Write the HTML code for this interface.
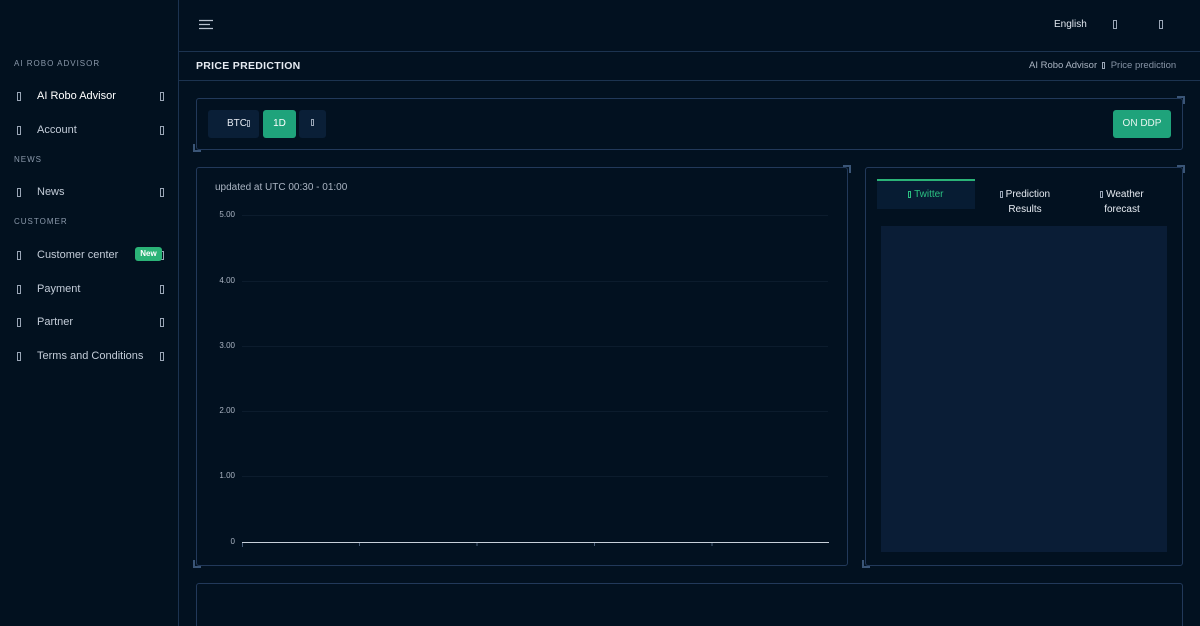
<!DOCTYPE html><html><head><style>
*{box-sizing:border-box;margin:0;padding:0}
html,body{width:1200px;height:626px;overflow:hidden}
body{background:#021120;font-family:"Liberation Sans",sans-serif;color:#c9d2de;position:relative}
.a{position:absolute}
.tofu{display:inline-block;width:4px;height:9px;border:1px solid #9aa6b6;vertical-align:middle}
.sb{left:0;top:0;width:179px;height:626px;border-right:1px solid #1c3350;background:#02111f}
.sec{font-size:8px;letter-spacing:1px;color:#8a98aa;left:14px}
.it{left:0;width:178px;font-size:11px;color:#c3ccd8}
.it .tofu{position:absolute;left:17px;top:3px}
.it .r{position:absolute;left:160px;top:3px}
.it span.t{position:absolute;left:37px;top:1px}
.card{border:1px solid #22395a;border-radius:3px}
.corner{width:8px;height:8px;border-color:#3a5577;border-style:solid;border-width:0}
.gl{left:242px;width:586px;height:1px;background:#0c1c2d}
.yl{font-size:8px;color:#aab4c2;width:40px;text-align:right;left:195px}
</style></head><body>
<div class="a sb"></div>
<div class="a sec" style="top:59px">AI ROBO ADVISOR</div>
<div class="a it" style="top:89px;color:#fff"><i class="tofu"></i><span class="t">AI Robo Advisor</span><i class="tofu r"></i></div>
<div class="a it" style="top:123px"><i class="tofu"></i><span class="t">Account</span><i class="tofu r"></i></div>
<div class="a sec" style="top:155px">NEWS</div>
<div class="a it" style="top:185px"><i class="tofu"></i><span class="t">News</span><i class="tofu r"></i></div>
<div class="a sec" style="top:217px">CUSTOMER</div>
<div class="a it" style="top:248px"><i class="tofu"></i><span class="t">Customer center</span><i class="tofu r"></i></div>
<div class="a" style="left:135px;top:247px;width:27px;height:14px;background:#2bb377;border-radius:3px;color:#fff;font-size:8px;font-weight:bold;text-align:center;line-height:14px">New</div>
<div class="a it" style="top:282px"><i class="tofu"></i><span class="t">Payment</span><i class="tofu r"></i></div>
<div class="a it" style="top:315px"><i class="tofu"></i><span class="t">Partner</span><i class="tofu r"></i></div>
<div class="a it" style="top:349px"><i class="tofu"></i><span class="t">Terms and Conditions</span><i class="tofu r"></i></div>

<svg class="a" style="left:199px;top:19px" width="16" height="12"><path d="M0 1.5H14M0 5.5H11M0 9.5H14" stroke="#b8c2cf" stroke-width="1.3"/></svg>
<div class="a" style="left:1054px;top:19px;font-size:10px;color:#e0e6ee">English</div>
<i class="a tofu" style="left:1113px;top:20px"></i><i class="a tofu" style="left:1159px;top:20px"></i>
<div class="a" style="left:179px;top:51px;width:1021px;height:1px;background:#1c3350"></div>
<div class="a" style="left:196px;top:60px;font-size:10.5px;font-weight:bold;color:#e6ebf2;letter-spacing:.3px">PRICE PREDICTION</div>
<div class="a" style="left:1029px;top:60px;font-size:9.5px;color:#aab4c2;white-space:nowrap">AI Robo Advisor &nbsp;<i class="tofu" style="height:7px;width:3px"></i>&nbsp; <span style="color:#8794a6">Price prediction</span></div>
<div class="a" style="left:179px;top:80px;width:1021px;height:1px;background:#1c3350"></div>

<div class="a card" style="left:196px;top:98px;width:987px;height:52px"></div>
<div class="a corner" style="left:193px;top:144px;border-left-width:2px;border-bottom-width:2px"></div>
<div class="a corner" style="left:1177px;top:96px;border-right-width:2px;border-top-width:2px"></div>
<div class="a" style="left:208px;top:110px;width:51px;height:28px;background:#0a1f37;border-radius:3px;color:#e6ebf2;font-size:10px;line-height:28px;padding-left:19px">BTC<i class="tofu" style="height:7px;width:3px"></i></div>
<div class="a" style="left:263px;top:110px;width:33px;height:28px;background:#1fa37b;border-radius:3px;color:#fff;font-size:10px;line-height:28px;text-align:center">1D</div>
<div class="a" style="left:299px;top:110px;width:27px;height:28px;background:#0a1f37;border-radius:3px;text-align:center;line-height:26px"><i class="tofu" style="height:7px;width:3px"></i></div>
<div class="a" style="left:1113px;top:110px;width:58px;height:28px;background:#1fa37b;border-radius:3px;color:#e6f5ef;font-size:10px;line-height:28px;text-align:center">ON DDP</div>

<div class="a card" style="left:196px;top:167px;width:652px;height:399px"></div>
<div class="a corner" style="left:193px;top:560px;border-left-width:2px;border-bottom-width:2px"></div>
<div class="a corner" style="left:843px;top:165px;border-right-width:2px;border-top-width:2px"></div>
<div class="a" style="left:215px;top:182px;font-size:10px;color:#aab4c2">updated at UTC 00:30 - 01:00</div>
<div class="a gl" style="top:215px"></div><div class="a yl" style="top:210px">5.00</div>
<div class="a gl" style="top:281px"></div><div class="a yl" style="top:276px">4.00</div>
<div class="a gl" style="top:346px"></div><div class="a yl" style="top:341px">3.00</div>
<div class="a gl" style="top:411px"></div><div class="a yl" style="top:406px">2.00</div>
<div class="a gl" style="top:476px"></div><div class="a yl" style="top:471px">1.00</div>
<div class="a yl" style="top:537px">0</div>
<div class="a" style="left:242px;top:542px;width:587px;height:1px;background:#c8d0da"></div>
<svg class="a" style="left:240px;top:543px" width="600" height="5"><path d="M2.5 0V4M119.5 0V3M237 0V3M354.5 0V3M472 0V3" stroke="#4a5e78"/></svg>

<div class="a card" style="left:865px;top:167px;width:318px;height:399px"></div>
<div class="a corner" style="left:862px;top:560px;border-left-width:2px;border-bottom-width:2px"></div>
<div class="a corner" style="left:1177px;top:165px;border-right-width:2px;border-top-width:2px"></div>
<div class="a" style="left:877px;top:179px;width:98px;height:30px;background:#071c33;border-top:2px solid #2bb377;color:#2bc082;font-size:10px;text-align:center;line-height:28px"><i class="tofu" style="height:7px;width:3px;border-color:#2bc082"></i> Twitter</div>
<div class="a" style="left:976px;top:187px;width:98px;color:#e6ebf2;font-size:10px;text-align:center;line-height:15px"><i class="tofu" style="height:7px;width:3px"></i> Prediction<br>Results</div>
<div class="a" style="left:1073px;top:187px;width:98px;color:#e6ebf2;font-size:10px;text-align:center;line-height:15px"><i class="tofu" style="height:7px;width:3px"></i> Weather<br>forecast</div>
<div class="a" style="left:881px;top:226px;width:286px;height:326px;background:#0a1d36"></div>

<div class="a card" style="left:196px;top:583px;width:987px;height:60px"></div>
</body></html>
